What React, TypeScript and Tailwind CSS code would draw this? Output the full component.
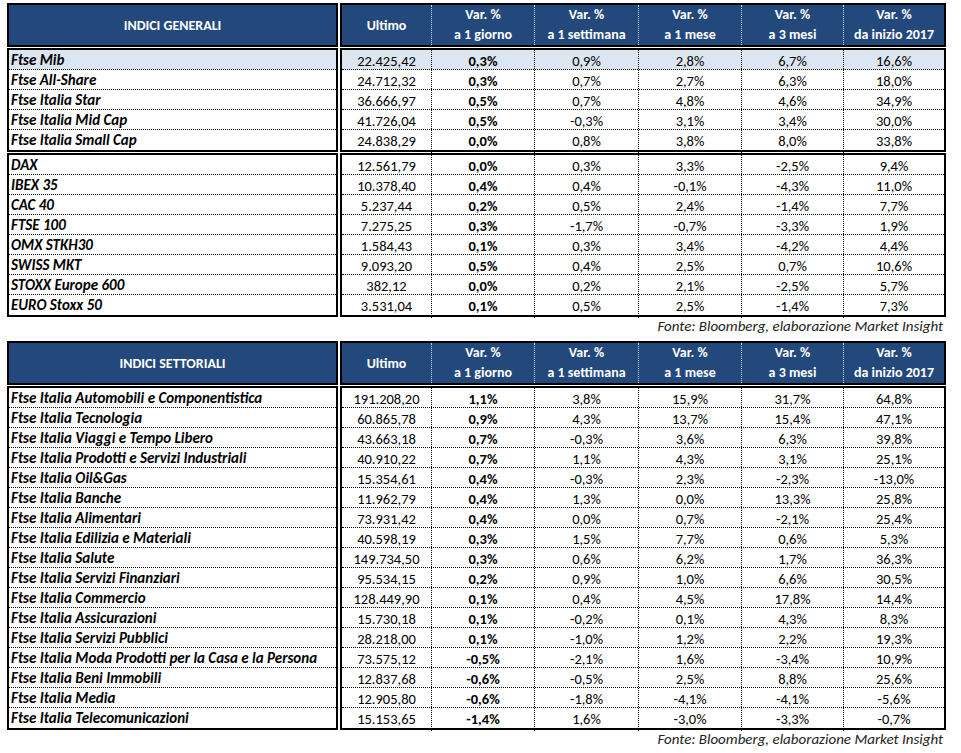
import React from 'react';

type Row = { name: string; v: string[]; hl?: boolean };

const cols = ['Ultimo', 'a 1 giorno', 'a 1 settimana', 'a 1 mese', 'a 3 mesi', 'da inizio 2017'];

const generali: Row[][] = [
    [
        { name: 'Ftse Mib', v: ['22.425,42', '0,3%', '0,9%', '2,8%', '6,7%', '16,6%'], hl: true },
        { name: 'Ftse All-Share', v: ['24.712,32', '0,3%', '0,7%', '2,7%', '6,3%', '18,0%'] },
        { name: 'Ftse Italia Star', v: ['36.666,97', '0,5%', '0,7%', '4,8%', '4,6%', '34,9%'] },
        { name: 'Ftse Italia Mid Cap', v: ['41.726,04', '0,5%', '-0,3%', '3,1%', '3,4%', '30,0%'] },
        { name: 'Ftse Italia Small Cap', v: ['24.838,29', '0,0%', '0,8%', '3,8%', '8,0%', '33,8%'] },
    ],
    [
        { name: 'DAX', v: ['12.561,79', '0,0%', '0,3%', '3,3%', '-2,5%', '9,4%'] },
        { name: 'IBEX 35', v: ['10.378,40', '0,4%', '0,4%', '-0,1%', '-4,3%', '11,0%'] },
        { name: 'CAC 40', v: ['5.237,44', '0,2%', '0,5%', '2,4%', '-1,4%', '7,7%'] },
        { name: 'FTSE 100', v: ['7.275,25', '0,3%', '-1,7%', '-0,7%', '-3,3%', '1,9%'] },
        { name: 'OMX STKH30', v: ['1.584,43', '0,1%', '0,3%', '3,4%', '-4,2%', '4,4%'] },
        { name: 'SWISS MKT', v: ['9.093,20', '0,5%', '0,4%', '2,5%', '0,7%', '10,6%'] },
        { name: 'STOXX Europe 600', v: ['382,12', '0,0%', '0,2%', '2,1%', '-2,5%', '5,7%'] },
        { name: 'EURO Stoxx 50', v: ['3.531,04', '0,1%', '0,5%', '2,5%', '-1,4%', '7,3%'] },
    ],
];

const settoriali: Row[][] = [
    [
        { name: 'Ftse Italia Automobili e Componentistica', v: ['191.208,20', '1,1%', '3,8%', '15,9%', '31,7%', '64,8%'] },
        { name: 'Ftse Italia Tecnologia', v: ['60.865,78', '0,9%', '4,3%', '13,7%', '15,4%', '47,1%'] },
        { name: 'Ftse Italia Viaggi e Tempo Libero', v: ['43.663,18', '0,7%', '-0,3%', '3,6%', '6,3%', '39,8%'] },
        { name: 'Ftse Italia Prodotti e Servizi Industriali', v: ['40.910,22', '0,7%', '1,1%', '4,3%', '3,1%', '25,1%'] },
        { name: 'Ftse Italia Oil&Gas', v: ['15.354,61', '0,4%', '-0,3%', '2,3%', '-2,3%', '-13,0%'] },
        { name: 'Ftse Italia Banche', v: ['11.962,79', '0,4%', '1,3%', '0,0%', '13,3%', '25,8%'] },
        { name: 'Ftse Italia Alimentari', v: ['73.931,42', '0,4%', '0,0%', '0,7%', '-2,1%', '25,4%'] },
        { name: 'Ftse Italia Edilizia e Materiali', v: ['40.598,19', '0,3%', '1,5%', '7,7%', '0,6%', '5,3%'] },
        { name: 'Ftse Italia Salute', v: ['149.734,50', '0,3%', '0,6%', '6,2%', '1,7%', '36,3%'] },
        { name: 'Ftse Italia Servizi Finanziari', v: ['95.534,15', '0,2%', '0,9%', '1,0%', '6,6%', '30,5%'] },
        { name: 'Ftse Italia Commercio', v: ['128.449,90', '0,1%', '0,4%', '4,5%', '17,8%', '14,4%'] },
        { name: 'Ftse Italia Assicurazioni', v: ['15.730,18', '0,1%', '-0,2%', '0,1%', '4,3%', '8,3%'] },
        { name: 'Ftse Italia Servizi Pubblici', v: ['28.218,00', '0,1%', '-1,0%', '1,2%', '2,2%', '19,3%'] },
        { name: 'Ftse Italia Moda Prodotti per la Casa e la Persona', v: ['73.575,12', '-0,5%', '-2,1%', '1,6%', '-3,4%', '10,9%'] },
        { name: 'Ftse Italia Beni Immobili', v: ['12.837,68', '-0,6%', '-0,5%', '2,5%', '8,8%', '25,6%'] },
        { name: 'Ftse Italia Media', v: ['12.905,80', '-0,6%', '-1,8%', '-4,1%', '-4,1%', '-5,6%'] },
        { name: 'Ftse Italia Telecomunicazioni', v: ['15.153,65', '-1,4%', '1,6%', '-3,0%', '-3,3%', '-0,7%'] },
    ],
];

const grid = 'grid grid-cols-[89px_103px_104px_103px_102px_1fr]';

const Table: React.FC<{ title: string; groups: Row[][] }> = ({ title, groups }) => (
    <div className="flex gap-[2px]">
        {/* label block */}
        <div className="w-[331px] flex flex-col gap-[1px]">
            <div className="h-[44px] border-2 border-black bg-[#23487b] flex items-center justify-center text-white font-bold text-[14px]">
                {title}
            </div>
            {groups.map((g, gi) => (
                <div key={gi} className="border-2 border-black">
                    {g.map((r, ri) => (
                        <div
                            key={r.name}
                            className={`h-5 flex items-center pt-px pl-[2px] font-bold italic text-[15px] text-black border-black ${ri < g.length - 1 ? 'border-b border-dotted' : ''} ${r.hl ? 'bg-[#dce6f1]' : ''}`}
                        >
                            {r.name}
                        </div>
                    ))}
                </div>
            ))}
        </div>

        {/* data block */}
        <div className="w-[606px] flex flex-col gap-[1px]">
            <div className={`h-[44px] border-2 border-black bg-[#23487b] text-white font-bold text-[14px] ${grid}`}>
                {cols.map((c, i) =>
                    i === 0 ? (
                        <div key={c} className="flex items-center justify-center">{c}</div>
                    ) : (
                        <div key={c} className="flex flex-col items-center justify-center leading-5 border-l border-dotted border-[#c8d2e0]">
                            <span>Var. %</span>
                            <span>{c}</span>
                        </div>
                    )
                )}
            </div>
            {groups.map((g, gi) => (
                <div key={gi} className="border-2 border-black">
                    {g.map((r, ri) => (
                        <div
                            key={r.name}
                            className={`h-5 text-[14.5px] text-black border-black ${grid} ${ri < g.length - 1 ? 'border-b border-dotted' : ''} ${r.hl ? 'bg-[#dce6f1]' : ''}`}
                        >
                            {r.v.map((v, i) => (
                                <div
                                    key={i}
                                    className={`flex items-center justify-center pt-px ${i > 0 ? 'border-l border-dotted border-black' : ''} ${i === 1 ? 'font-bold' : ''}`}
                                >
                                    {v}
                                </div>
                            ))}
                        </div>
                    ))}
                </div>
            ))}
        </div>
    </div>
);

const Fonte = () => (
    <div className="w-[939px] h-[24px] text-right italic text-[15px] text-[#222] leading-[19px] pr-[3px]">
        Fonte: Bloomberg, elaborazione Market Insight
    </div>
);

export default function App() {
    return (
        <div
            className="w-[961px] h-[753px] bg-white pl-[7px] pt-[3px]"
            style={{ fontFamily: 'Carlito, Calibri, Lato, "Liberation Sans", sans-serif' }}
        >
            <Table title="INDICI GENERALI" groups={generali} />
            <Fonte />
            <Table title="INDICI SETTORIALI" groups={settoriali} />
            <Fonte />
        </div>
    );
}
